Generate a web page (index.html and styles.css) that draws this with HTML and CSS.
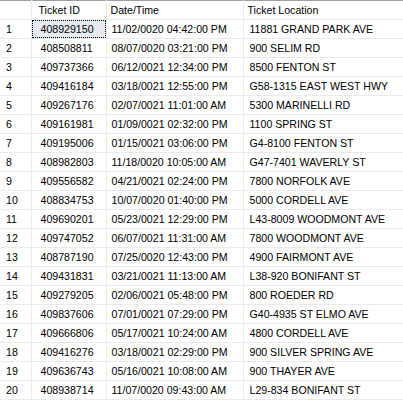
FILE: index.html
```html
<!DOCTYPE html>
<html>
<head>
<meta charset="utf-8">
<link rel="stylesheet" href="styles.css">
</head>
<body>
<table class="grid">
<colgroup><col class="c0"><col class="c1"><col class="c2"><col class="c3"></colgroup>
<thead>
<tr><th class="rn"></th><th class="id">Ticket ID</th><th class="dt">Date/Time</th><th class="loc">Ticket Location</th></tr>
</thead>
<tbody>
<tr><td class="rn">1</td><td class="id"><span class="sel">408929150</span></td><td class="dt">11/02/0020 04:42:00 PM</td><td class="loc">11881 GRAND PARK AVE</td></tr>
<tr><td class="rn">2</td><td class="id">408508811</td><td class="dt">08/07/0020 03:21:00 PM</td><td class="loc">900 SELIM RD</td></tr>
<tr><td class="rn">3</td><td class="id">409737366</td><td class="dt">06/12/0021 12:34:00 PM</td><td class="loc">8500 FENTON ST</td></tr>
<tr><td class="rn">4</td><td class="id">409416184</td><td class="dt">03/18/0021 12:55:00 PM</td><td class="loc">G58-1315 EAST WEST HWY</td></tr>
<tr><td class="rn">5</td><td class="id">409267176</td><td class="dt">02/07/0021 11:01:00 AM</td><td class="loc">5300 MARINELLI RD</td></tr>
<tr><td class="rn">6</td><td class="id">409161981</td><td class="dt">01/09/0021 02:32:00 PM</td><td class="loc">1100 SPRING ST</td></tr>
<tr><td class="rn">7</td><td class="id">409195006</td><td class="dt">01/15/0021 03:06:00 PM</td><td class="loc">G4-8100 FENTON ST</td></tr>
<tr><td class="rn">8</td><td class="id">408982803</td><td class="dt">11/18/0020 10:05:00 AM</td><td class="loc">G47-7401 WAVERLY ST</td></tr>
<tr><td class="rn">9</td><td class="id">409556582</td><td class="dt">04/21/0021 02:24:00 PM</td><td class="loc">7800 NORFOLK AVE</td></tr>
<tr><td class="rn">10</td><td class="id">408834753</td><td class="dt">10/07/0020 01:40:00 PM</td><td class="loc">5000 CORDELL AVE</td></tr>
<tr><td class="rn">11</td><td class="id">409690201</td><td class="dt">05/23/0021 12:29:00 PM</td><td class="loc">L43-8009 WOODMONT AVE</td></tr>
<tr><td class="rn">12</td><td class="id">409747052</td><td class="dt">06/07/0021 11:31:00 AM</td><td class="loc">7800 WOODMONT AVE</td></tr>
<tr><td class="rn">13</td><td class="id">408787190</td><td class="dt">07/25/0020 12:43:00 PM</td><td class="loc">4900 FAIRMONT AVE</td></tr>
<tr><td class="rn">14</td><td class="id">409431831</td><td class="dt">03/21/0021 11:13:00 AM</td><td class="loc">L38-920 BONIFANT ST</td></tr>
<tr><td class="rn">15</td><td class="id">409279205</td><td class="dt">02/06/0021 05:48:00 PM</td><td class="loc">800 ROEDER RD</td></tr>
<tr><td class="rn">16</td><td class="id">409837606</td><td class="dt">07/01/0021 07:29:00 PM</td><td class="loc">G40-4935 ST ELMO AVE</td></tr>
<tr><td class="rn">17</td><td class="id">409666806</td><td class="dt">05/17/0021 10:24:00 AM</td><td class="loc">4800 CORDELL AVE</td></tr>
<tr><td class="rn">18</td><td class="id">409416276</td><td class="dt">03/18/0021 02:29:00 PM</td><td class="loc">900 SILVER SPRING AVE</td></tr>
<tr><td class="rn">19</td><td class="id">409636743</td><td class="dt">05/16/0021 10:08:00 AM</td><td class="loc">900 THAYER AVE</td></tr>
<tr><td class="rn">20</td><td class="id">408938714</td><td class="dt">11/07/0020 09:43:00 AM</td><td class="loc">L29-834 BONIFANT ST</td></tr>
</tbody>
</table>
</body>
</html>
```
FILE: styles.css
```css
html, body {
  margin: 0;
  padding: 0;
  background: #ffffff;
}
.grid {
  border-collapse: collapse;
  table-layout: fixed;
  width: 403px;
  font-family: "Liberation Sans", Arial, sans-serif;
  font-size: 10.6px;
  color: #000000;
  border-top: 1px solid #a0a0a0;
}
.c0 { width: 31px; }
.c1 { width: 75px; }
.c2 { width: 137px; }
.c3 { width: 160px; }
.grid th, .grid td {
  height: 18px;
  padding: 0;
  line-height: 18px;
  white-space: nowrap;
  overflow: hidden;
  text-align: left;
  font-weight: normal;
  border-right: 1px solid #ebebeb;
  border-bottom: 1px solid #ebebeb;
  box-sizing: border-box;
}
.grid th.rn, .grid td.rn { padding-left: 6px; }
.grid th.id { padding-left: 7px; }
.grid th.dt { padding-left: 4px; }
.grid td.dt { padding-left: 5px; }
.grid th.loc { padding-left: 4px; }
.grid td.loc { padding-left: 6px; }
.grid td.id { padding-left: 9px; }
.sel {
  display: block;
  margin: 0 0 0 -9px;
  padding-left: 9px;
  height: 18px;
  box-sizing: border-box;
  background: #e6ebf1;
  outline: 1px dotted #000000;
  outline-offset: -1px;
}
```
